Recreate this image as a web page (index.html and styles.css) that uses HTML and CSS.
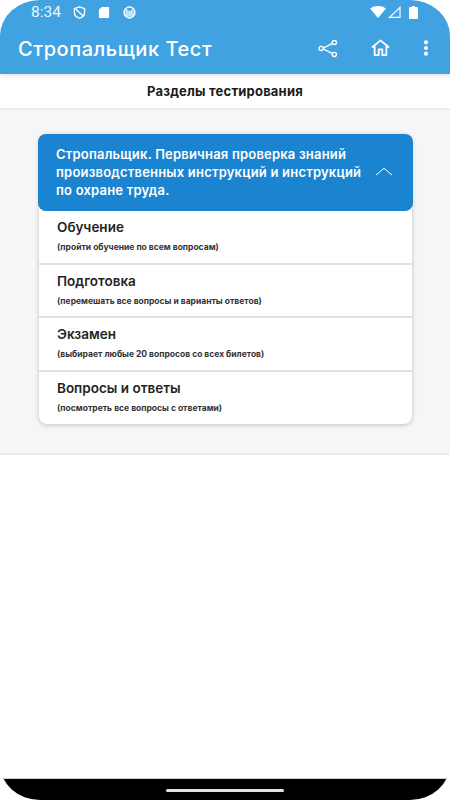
FILE: index.html
```html
<!DOCTYPE html>
<html lang="ru">
<head>
<meta charset="utf-8">
<title>Стропальщик Тест</title>
<link rel="stylesheet" href="styles.css">
</head>
<body>
<div class="screen">
  <header class="appbar">
    <div class="status">
      <div class="status-left">
        <span class="time">8:34</span>
        <svg class="si" width="13" height="13" viewBox="0 0 14 14"><path d="M7 1 L12.500 2.800 V7 C12.500 10 10 12.200 7 13 C4 12.200 1.500 10 1.500 7 V2.800 Z M3 3.600 L10.800 10.500" fill="none" stroke="#fff" stroke-width="1.500" stroke-linejoin="round"/></svg>
        <svg class="si" width="12" height="13" viewBox="0 0 12 14"><path d="M3.500 1 H10.500 A1 1 0 0 1 11.500 2 V12 A1 1 0 0 1 10.500 13 H1.500 A1 1 0 0 1 .5 12 V4 Z" fill="#fff"/></svg>
        <svg class="si" width="15" height="13" viewBox="0 0 15 14"><circle cx="7.500" cy="7" r="5.800" fill="none" stroke="#fff" stroke-width="1.600"/><path d="M3 5 L5 3.500 L6.200 5 H8.800 L10 3.500 L12 5 V8 A4.500 3.500 0 0 1 3 8 Z" fill="#fff" opacity=".7"/></svg>
      </div>
      <div class="status-right">
        <svg width="16" height="12" viewBox="0 0 16 12"><path d="M0 2.500 C4.500 -.8 11.500 -.8 16 2.500 L8 12 Z" fill="#fff"/></svg>
        <svg width="13" height="12" viewBox="0 0 13 12"><path d="M12 1.500 V11.300 H1.500 Z" fill="none" stroke="#fff" stroke-width="1.200"/></svg>
        <svg class="batt" width="9" height="13" viewBox="0 0 9 13"><path d="M3 0 H6 V1 H8 A1 1 0 0 1 9 2 V12 A1 1 0 0 1 8 13 H1 A1 1 0 0 1 0 12 V2 A1 1 0 0 1 1 1 H3 Z" fill="#fff"/></svg>
      </div>
    </div>
    <div class="toolbar">
      <span class="app-title">Стропальщик Тест</span>
      <div class="actions">
        <svg width="20" height="19" viewBox="0 0 22 20"><path d="M16.500 4 L5 10 L16.500 16" fill="none" stroke="#fff" stroke-width="1.500"/><circle cx="18" cy="3.500" r="2.300" fill="#41a2e2" stroke="#fff" stroke-width="1.500"/><circle cx="3.500" cy="10" r="2.300" fill="#41a2e2" stroke="#fff" stroke-width="1.500"/><circle cx="18" cy="16.500" r="2.300" fill="#41a2e2" stroke="#fff" stroke-width="1.500"/></svg>
        <svg width="21" height="18" viewBox="0 0 22 20"><path d="M1.500 9.500 L11 1.500 L20.500 9.500 M4.500 8 V18 H9 V11.500 H13 V18 H17.500 V8" fill="none" stroke="#fff" stroke-width="2" stroke-linejoin="round"/></svg>
        <svg width="6" height="16" viewBox="0 0 6 16"><circle cx="3" cy="2.300" r="2.100" fill="#fff"/><circle cx="3" cy="8" r="2.100" fill="#fff"/><circle cx="3" cy="13.700" r="2.100" fill="#fff"/></svg>
      </div>
    </div>
  </header>
  <div class="subhead">Разделы тестирования</div>
  <section class="panel">
    <div class="card">
      <div class="card-head">
        <span class="card-title">Стропальщик. Первичная проверка знаний производственных инструкций и инструкций по охране труда.</span>
        <svg class="chev" width="18" height="9" viewBox="0 0 20 10"><path d="M1 9 L10 1.500 L19 9" fill="none" stroke="#fff" stroke-width="1.100"/></svg>
      </div>
      <div class="row"><span class="row-title">Обучение</span><span class="row-sub">(пройти обучение по всем вопросам)</span></div>
      <div class="row"><span class="row-title">Подготовка</span><span class="row-sub">(перемешать все вопросы и варианты ответов)</span></div>
      <div class="row"><span class="row-title">Экзамен</span><span class="row-sub">(выбирает любые 20 вопросов со всех билетов)</span></div>
      <div class="row"><span class="row-title">Вопросы и ответы</span><span class="row-sub">(посмотреть все вопросы с ответами)</span></div>
    </div>
  </section>
  <div class="spacer"></div>
  <footer class="navbar"><span class="pill"></span></footer>
</div>
</body>
</html>
```
FILE: styles.css
```css
* { box-sizing: border-box; }
html, body { margin: 0; height: 100%; background: #fff; }
body { font-family: Inter, Roboto, "Noto Sans", sans-serif; }
.screen {
  width: 450px; height: 800px; display: flex; flex-direction: column;
  overflow: hidden; border-radius: 40px / 36px; background: #fff;
}
.appbar {
  height: 74px; flex: none; background: #41a2e2; color: #fff;
  box-shadow: 0 2px 4px rgba(0,0,0,.1); position: relative;
}
.status {
  height: 26px; display: flex; justify-content: space-between; align-items: center;
  padding: 0 32px 2px 31px;
}
.status-left { display: flex; align-items: center; gap: 12px; }
.time { font-family: Roboto, sans-serif; font-size: 15.500px; opacity: .9; }
.status-right { display: flex; align-items: center; gap: 2px; }
.batt { margin-left: 6px; }
.si { display: block; }
.toolbar {
  height: 46px; display: flex; justify-content: space-between; align-items: center;
  padding: 0 21px 0 18px;
}
.app-title { font-size: 20px; font-weight: 500; letter-spacing: .55px; }
.actions { display: flex; align-items: center; gap: 32px; margin-bottom: 2px; }
.subhead {
  height: 36px; flex: none; display: flex; align-items: center; justify-content: center;
  font-size: 13px; font-weight: 700; letter-spacing: .2px; color: #1b1b1b;
  border-bottom: 2px solid #ececec; padding-bottom: 1px;
}
.panel {
  height: 345px; flex: none; background: #f6f6f6; padding: 24px 38px 0 39px;
  border-bottom: 2px solid #ececec;
}
.card {
  border-radius: 8px; background: #fff;
  box-shadow: 0 1px 5px rgba(0,0,0,.22);
}
.card-head {
  height: 77px; background: #1a84d0; border-radius: 8px; color: #fff;
  display: flex; align-items: center; justify-content: space-between;
  padding: 0 20px 2px 18px; margin: 0 -1px;
}
.card-title { width: 312px; font-size: 13px; font-weight: 600; line-height: 18px; letter-spacing: .2px; }
.chev { display: block; }
.row {
  height: 53.500px; display: flex; flex-direction: column; padding: 8px 18px 0;
  border-bottom: 2px solid #e2e2e2;
}
.row:last-child { border-bottom: 0; height: 52px; }
.row-title { font-size: 13.500px; font-weight: 600; line-height: 17px; color: #242424; }
.row-sub { font-size: 8.500px; font-weight: 700; line-height: 11px; margin-top: 6px; color: #333; }
.spacer { flex: 1; }
.navbar {
  height: 22px; flex: none; background: #000; display: flex; justify-content: center;
  padding-top: 10px; border-top: 1px solid #ccc;
}
.pill { width: 118px; height: 3px; border-radius: 2px; background: #e2e2e2; }
```
